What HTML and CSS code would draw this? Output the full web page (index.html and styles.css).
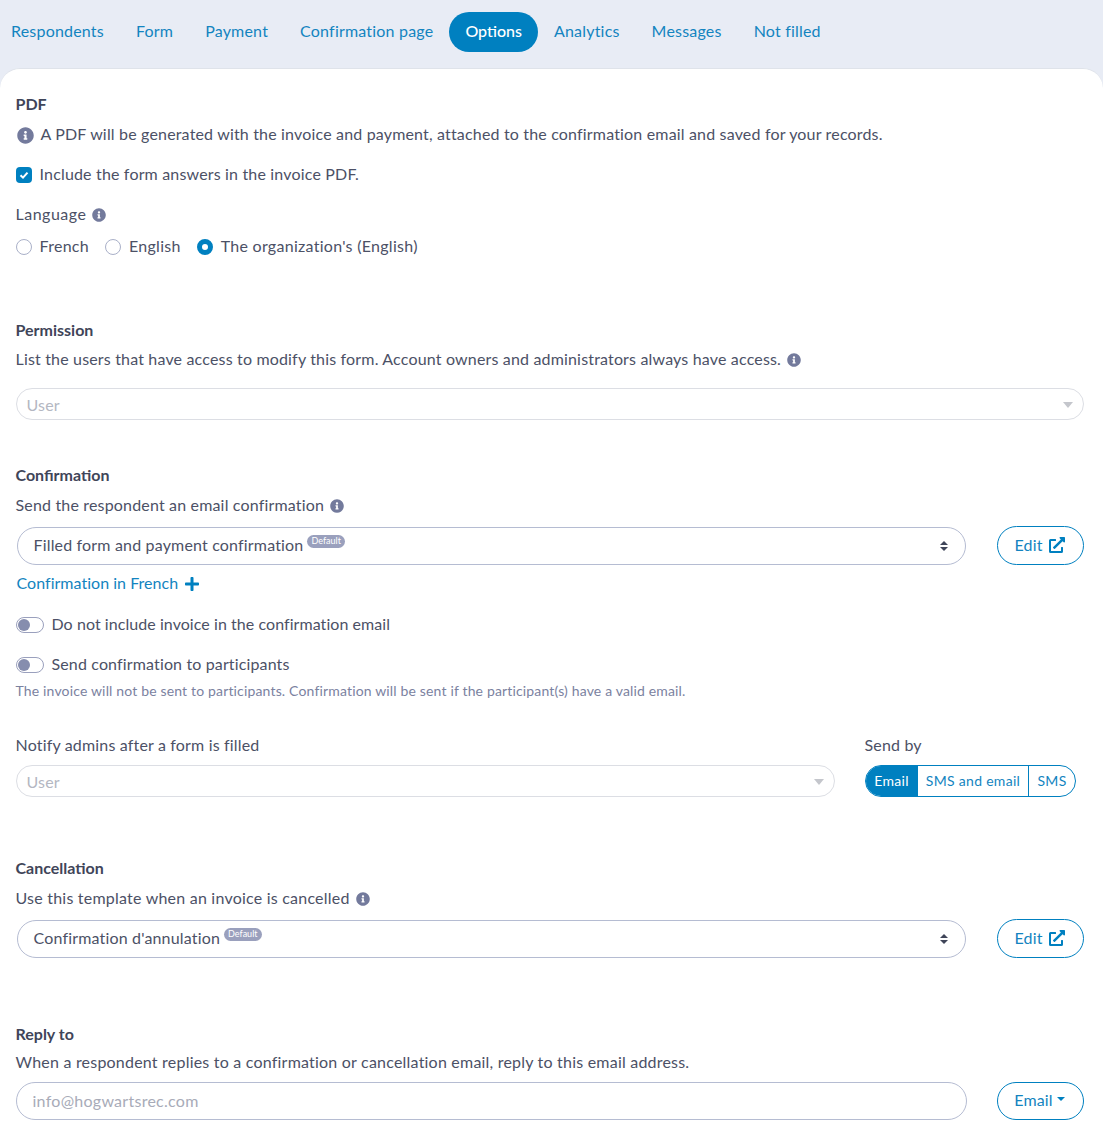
FILE: index.html
```html
<!DOCTYPE html>
<html lang="en">
<head>
    <meta charset="UTF-8">
    <meta name="viewport" content="width=device-width, initial-scale=1.0">
    <title>Form options</title>
    <link rel="stylesheet" href="styles.css">
</head>
<body>
    <svg class="icon-defs" xmlns="http://www.w3.org/2000/svg">
        <symbol id="i-info" viewBox="0 0 512 512"><path d="M256 8C119.043 8 8 119.083 8 256c0 136.997 111.043 248 248 248s248-111.003 248-248C504 119.083 392.957 8 256 8zm0 110c23.196 0 42 18.804 42 42s-18.804 42-42 42-42-18.804-42-42 18.804-42 42-42zm56 254c0 6.627-5.373 12-12 12h-88c-6.627 0-12-5.373-12-12v-24c0-6.627 5.373-12 12-12h12v-64h-12c-6.627 0-12-5.373-12-12v-24c0-6.627 5.373-12 12-12h64c6.627 0 12 5.373 12 12v100h12c6.627 0 12 5.373 12 12v24z"/></symbol>
        <symbol id="i-link" viewBox="0 0 512 512"><path d="M432 320h-32a16 16 0 0 0-16 16v112H64V128h144a16 16 0 0 0 16-16V80a16 16 0 0 0-16-16H48a48 48 0 0 0-48 48v352a48 48 0 0 0 48 48h352a48 48 0 0 0 48-48V336a16 16 0 0 0-16-16zM488 0H360c-21.37 0-32.05 25.91-17 41l35.73 35.73L135 320.37a24 24 0 0 0 0 34L157.67 377a24 24 0 0 0 34 0l243.61-243.68L471 169c15 15 41 4.5 41-17V24a24 24 0 0 0-24-24z"/></symbol>
        <symbol id="i-plus" viewBox="0 0 448 512"><path d="M416 208H272V64c0-17.67-14.33-32-32-32h-32c-17.67 0-32 14.33-32 32v144H32c-17.67 0-32 14.33-32 32v32c0 17.67 14.33 32 32 32h144v144c0 17.67 14.33 32 32 32h32c17.67 0 32-14.33 32-32V304h144c17.67 0 32-14.33 32-32v-32c0-17.67-14.33-32-32-32z"/></symbol>
        <symbol id="i-sort" viewBox="0 0 8 10"><path d="M4 0l4 4H0zM0 6h8l-4 4z"/></symbol>
    </svg>

    <nav class="tabs">
        <a class="tab">Respondents</a>
        <a class="tab">Form</a>
        <a class="tab">Payment</a>
        <a class="tab">Confirmation page</a>
        <a class="tab active">Options</a>
        <a class="tab">Analytics</a>
        <a class="tab">Messages</a>
        <a class="tab">Not filled</a>
    </nav>

    <main class="panel">
        <section class="pdf-section">
            <h3>PDF</h3>
            <p class="line pdf-note"><svg class="info big"><use href="#i-info"/></svg>A PDF will be generated with the invoice and payment, attached to the confirmation email and saved for your records.</p>
            <label class="line check-row"><span class="checkbox"><svg viewBox="0 0 12 12"><path d="M2.5 6.2 5 8.6l4.5-5" fill="none" stroke="#fff" stroke-width="2"/></svg></span>Include the form answers in the invoice PDF.</label>
            <p class="line language">Language<svg class="info"><use href="#i-info"/></svg></p>
            <div class="line radios">
                <label class="radio-item"><span class="radio"></span>French</label>
                <label class="radio-item"><span class="radio"></span>English</label>
                <label class="radio-item"><span class="radio on"></span>The organization's (English)</label>
            </div>
        </section>

        <section class="permission-section">
            <h3>Permission</h3>
            <p class="line permission-note">List the users that have access to modify this form. Account owners and administrators always have access.<svg class="info"><use href="#i-info"/></svg></p>
            <div class="multi">User<span class="caret-grey"></span></div>
        </section>

        <section class="confirmation-section">
            <h3>Confirmation</h3>
            <p class="line sub">Send the respondent an email confirmation<svg class="info"><use href="#i-info"/></svg></p>
            <div class="select-row">
                <div class="select">Filled form and payment confirmation<span class="badge">Default</span><svg class="updown"><use href="#i-sort"/></svg></div>
                <a class="btn-outline">Edit<svg class="link-icon"><use href="#i-link"/></svg></a>
            </div>
            <a class="line add-link">Confirmation in French<svg class="plus-icon"><use href="#i-plus"/></svg></a>
            <label class="line switch-row first"><span class="switch"></span>Do not include invoice in the confirmation email</label>
            <label class="line switch-row"><span class="switch"></span>Send confirmation to participants</label>
            <p class="hint">The invoice will not be sent to participants. Confirmation will be sent if the participant(s) have a valid email.</p>
            <div class="notify-row">
                <div class="notify-col">
                    <p class="line">Notify admins after a form is filled</p>
                    <div class="multi">User<span class="caret-grey"></span></div>
                </div>
                <div class="send-col">
                    <p class="line">Send by</p>
                    <div class="btn-group">
                        <span class="seg seg-active">Email</span>
                        <span class="seg seg-mid">SMS and email</span>
                        <span class="seg seg-last">SMS</span>
                    </div>
                </div>
            </div>
        </section>

        <section class="cancel-section">
            <h3>Cancellation</h3>
            <p class="line sub">Use this template when an invoice is cancelled<svg class="info"><use href="#i-info"/></svg></p>
            <div class="select-row">
                <div class="select">Confirmation d'annulation<span class="badge">Default</span><svg class="updown"><use href="#i-sort"/></svg></div>
                <a class="btn-outline">Edit<svg class="link-icon"><use href="#i-link"/></svg></a>
            </div>
        </section>

        <section class="reply-section">
            <h3>Reply to</h3>
            <p class="line reply-note">When a respondent replies to a confirmation or cancellation email, reply to this email address.</p>
            <div class="reply-row">
                <input class="reply-input" type="text" placeholder="info@hogwartsrec.com">
                <a class="btn-outline">Email<span class="caret-blue"></span></a>
            </div>
        </section>
    </main>
</body>
</html>
```

FILE: styles.css
```css
* {
    box-sizing: border-box;
}

html, body {
    height: 1139px;
    overflow: hidden;
}

body {
    margin: 0;
    background-color: #e8ecf5;
    color: #4c5166;
    font-family: 'Lato', 'Noto Sans', sans-serif;
    font-size: 16px;
    letter-spacing: 0.17px;
    line-height: 24px;
}

.icon-defs {
    display: none;
}

p, h3 {
    margin: 0;
}

h3 {
    height: 24px;
    font-size: 16px;
    font-weight: 700;
    letter-spacing: 0;
    line-height: 22px;
    color: #3f4559;
}

.line {
    display: flex;
    align-items: center;
    height: 24px;
    padding-bottom: 2px;
}

/* tabs */
.tabs {
    display: flex;
    height: 68px;
    padding-top: 12px;
    letter-spacing: 0.2px;
}

.tab {
    height: 40px;
    padding: 0 16px;
    line-height: 38px;
    color: #1384c0;
    border-radius: 20px;
}

.tab:first-child {
    padding-left: 11px;
}

.tab.active {
    background-color: #0080c0;
    color: white;
    font-weight: 500;
    letter-spacing: 0;
}

/* panel */
.panel {
    height: 1071px;
    padding: 24px 19px 0 15.5px;
    background-color: white;
    border-top: 1px solid #dfe3ea;
    border-radius: 20px 20px 0 0;
}

.info {
    width: 14px;
    height: 14px;
    margin: 2px 0 0 6px;
    fill: #737a9c;
    flex: none;
}

.info.big {
    width: 17px;
    height: 17px;
    margin: 2px 7px 0 1px;
}

.pdf-note {
    margin-top: 6px;
}

.check-row {
    margin-top: 16px;
}

.checkbox {
    display: flex;
    width: 16px;
    height: 16px;
    margin: 2px 8px 0 0;
    background-color: #0080c0;
    border-radius: 4px;
    align-items: center;
    justify-content: center;
}

.checkbox svg {
    width: 12px;
    height: 12px;
}

.language {
    margin-top: 16px;
    letter-spacing: 0.5px;
}

.radios {
    margin-top: 8px;
    gap: 16px;
    letter-spacing: 0.28px;
}

.radio-item {
    display: flex;
    align-items: center;
}

.radio {
    width: 16px;
    height: 16px;
    margin: 2px 8px 0 0;
    border: 1px solid #a9b0c8;
    border-radius: 50%;
}

.radio.on {
    background-color: white;
    border: 5px solid #0080c0;
}

/* sections */
.permission-section {
    margin-top: 60px;
}

.permission-note {
    margin-top: 5px;
}

.confirmation-section {
    margin-top: 44px;
}

.sub {
    margin-top: 6px;
}

.cancel-section {
    margin-top: 60px;
}

.cancel-section .sub {
    letter-spacing: 0.22px;
}

.reply-section {
    margin-top: 65px;
}

.reply-note {
    margin-top: 4px;
    letter-spacing: 0.21px;
}

/* select boxes */
.multi {
    position: relative;
    height: 32px;
    margin-top: 16px;
    padding-left: 10px;
    line-height: 32px;
    color: #b4b7c2;
    border: 1px solid #dcdee4;
    border-radius: 16px;
}

.caret-grey {
    position: absolute;
    top: 13px;
    right: 10px;
    border-top: 6px solid #c4c6cc;
    border-left: 5px solid transparent;
    border-right: 5px solid transparent;
}

.select-row {
    display: flex;
    justify-content: space-between;
    margin-top: 9px;
    padding-left: 1px;
}

.select {
    position: relative;
    width: 949px;
    height: 38px;
    padding-left: 16px;
    line-height: 34px;
    color: #4c5166;
    border: 1px solid #b5bcd2;
    border-radius: 19px;
}

.badge {
    position: relative;
    top: -5px;
    display: inline-block;
    height: 13px;
    margin-left: 4px;
    padding: 0 4px;
    font-size: 9px;
    letter-spacing: 0;
    line-height: 12px;
    color: white;
    background-color: #9aa0bd;
    border-radius: 7px;
    vertical-align: middle;
}

.updown {
    position: absolute;
    top: 13px;
    right: 17px;
    width: 8px;
    height: 10px;
    fill: #3f4559;
}

.btn-outline {
    display: flex;
    align-items: center;
    justify-content: center;
    width: 87px;
    height: 39px;
    margin-top: -1px;
    padding: 0 2px 2px 0;
    color: #1384c0;
    border: 1px solid #0080c0;
    border-radius: 20px;
}

.link-icon {
    width: 16px;
    height: 16px;
    margin-left: 6px;
    fill: #0080c0;
}

.caret-blue {
    margin: -3px 0 0 4px;
    border-top: 4px solid #0080c0;
    border-left: 4px solid transparent;
    border-right: 4px solid transparent;
}

.add-link {
    margin-top: 7px;
    padding-left: 1px;
    letter-spacing: 0.03px;
    color: #1384c0;
}

.plus-icon {
    width: 14px;
    height: 16px;
    margin: 1px 0 0 7px;
    fill: #0080c0;
}

/* switches */
.switch-row {
    margin-top: 16px;
    letter-spacing: 0.14px;
}

.switch-row.first {
    margin-top: 17px;
    letter-spacing: 0.06px;
}

.switch {
    position: relative;
    width: 28px;
    height: 16px;
    margin: 2px 8px 0 0;
    border: 1px solid #9aa0bd;
    border-radius: 8px;
}

.switch::after {
    content: "";
    position: absolute;
    top: 1px;
    left: 1px;
    width: 12px;
    height: 12px;
    background-color: #868dae;
    border-radius: 50%;
}

.hint {
    margin-top: 5px;
    font-size: 14px;
    letter-spacing: 0.16px;
    line-height: 18px;
    color: #7b829f;
}

/* notify row */
.notify-row {
    display: flex;
    margin-top: 34px;
}

.notify-col {
    width: 819px;
}

.notify-col .multi {
    margin-top: 7px;
}

.send-col {
    margin-left: 30px;
}

.btn-group {
    display: flex;
    width: 211px;
    height: 32px;
    margin-top: 7px;
    font-size: 14px;
    letter-spacing: 0.3px;
    line-height: 29px;
    text-align: center;
    white-space: nowrap;
    color: #1384c0;
    border: 1px solid #0080c0;
    border-radius: 16px;
    overflow: hidden;
}

.seg-active {
    width: 52px;
    background-color: #0080c0;
    color: white;
}

.seg-mid {
    width: 111px;
    padding-left: 1px;
    border-right: 1px solid #0080c0;
}

.seg-last {
    flex: 1;
    padding-left: 1px;
}

/* reply row */
.reply-row {
    display: flex;
    justify-content: space-between;
    margin-top: 7px;
}

.reply-input {
    width: 951px;
    height: 38px;
    padding: 0 16px 2px;
    font: inherit;
    letter-spacing: 0.27px;
    border: 1px solid #b5bcd2;
    border-radius: 19px;
    outline: none;
}

.reply-input::placeholder {
    color: #a8abb8;
}

.reply-row .btn-outline {
    height: 38px;
    margin-top: 0;
}
```
